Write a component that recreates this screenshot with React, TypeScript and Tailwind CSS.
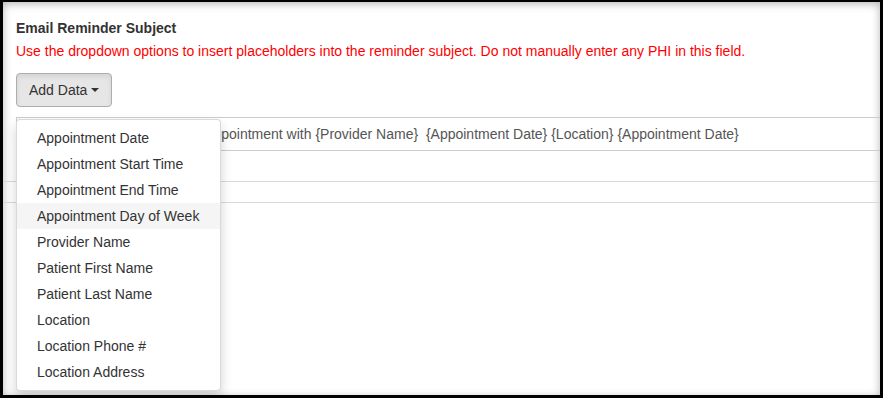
import React from "react";

const items = [
  "Appointment Date",
  "Appointment Start Time",
  "Appointment End Time",
  "Appointment Day of Week",
  "Provider Name",
  "Patient First Name",
  "Patient Last Name",
  "Location",
  "Location Phone #",
  "Location Address",
];

export default function App() {
  return (
    <div className="w-[883px] h-[398px] bg-black pt-[2px] pl-[3px] pr-[3px] pb-[3px] font-['Liberation_Sans',Arial,sans-serif]">
      <div className="relative w-full h-full bg-white overflow-hidden shadow-[inset_0_2px_8px_rgba(0,0,0,0.3)]">
        <div className="pt-[16px] pl-[13px]">
          <div className="text-[14px] leading-[20px] font-bold text-[#333]">Email Reminder Subject</div>
          <div className="mt-[3px] text-[14px] leading-[20px] text-[#ff0000]">
            Use the dropdown options to insert placeholders into the reminder subject. Do not manually enter any PHI in this field.
          </div>
          <button className="mt-[12px] flex items-center h-[34px] px-[12px] border border-[#adadad] rounded-[4px] bg-[#e6e6e6] text-[14px] leading-[20px] text-[#333] shadow-[inset_0_3px_5px_rgba(0,0,0,0.08)]">
            <span>Add Data&nbsp;</span>
            <span className="inline-block w-0 h-0 border-t-[4px] border-t-[#333] border-x-[4px] border-x-transparent" />
          </button>
          <div className="mt-[10px] -mr-[40px] h-[34px] border border-[#ccc] flex items-center px-[12px] text-[14px] text-[#555] whitespace-nowrap">
            Reminder of your upcoming Appointment with {"{Provider Name}"}&nbsp; {"{Appointment Date}"} {"{Location}"} {"{Appointment Date}"}
          </div>
        </div>
        <div className="mt-[30px] border-t border-[#d9d9d9]" />
        <div className="mt-[20px] border-t border-[#d9d9d9]" />
        <div className="pl-[13px] pt-[16px]">
          <div className="w-[204px] overflow-hidden whitespace-nowrap">
            <div className="text-[14px] leading-[20px] font-bold text-[#333]">Email Reminder Body</div>
            <div className="mt-[3px] text-[14px] leading-[20px] text-[#ff0000]">
              Use the dropdown options to insert placeholders
            </div>
          </div>
        </div>

        <div className="absolute left-[13px] top-[117px] w-[205px] py-[5px] bg-white border border-[rgba(0,0,0,0.15)] rounded-[4px] shadow-[0_6px_12px_rgba(0,0,0,0.175)]">
          {items.map((it, i) => (
            <div
              key={it}
              className={
                "px-[20px] py-[3px] text-[14px] leading-[20px] text-[#333] whitespace-nowrap " +
                (i === 3 ? "bg-[#f5f5f5]" : "")
              }
            >
              {it}
            </div>
          ))}
        </div>
      </div>
    </div>
  );
}
